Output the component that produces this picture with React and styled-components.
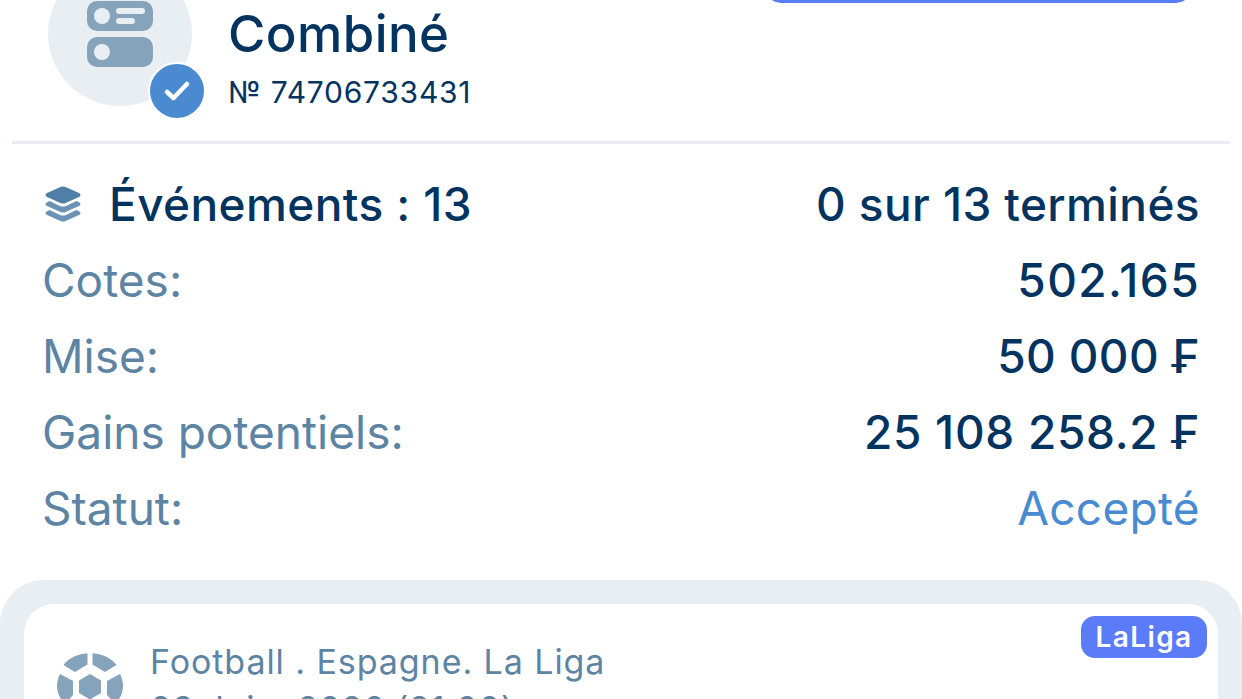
import React from "react";
import styled, { createGlobalStyle } from "styled-components";

const GlobalStyle = createGlobalStyle`
  html, body {
    margin: 0;
    padding: 0;
    background: #fff;
    overflow: hidden;
  }
  * {
    box-sizing: border-box;
  }
`;

const Page = styled.div`
  width: 1242px;
  height: 699px;
  overflow: hidden;
  font-family: Inter, "Liberation Sans", sans-serif;
  font-feature-settings: "calt" 0;
  color: #03345f;
`;

const Header = styled.div`
  display: flex;
  justify-content: space-between;
  align-items: flex-start;
  height: 182px;
  margin: -38px 12px 0;
  padding: 0 38px 0 36px;
  border-bottom: 3px solid #e9edf3;
`;

const HeaderLeft = styled.div`
  display: flex;
  gap: 37px;
`;

const Avatar = styled.div`
  position: relative;
  width: 144px;
  height: 144px;
  border-radius: 50%;
  background: #e9eef2;
  display: flex;
  align-items: center;
  justify-content: center;
`;

const CheckBadge = styled.div`
  position: absolute;
  right: -14px;
  bottom: -14px;
  width: 58px;
  height: 58px;
  border-radius: 50%;
  border: 2px solid #fff;
  background: #4a8ad0;
  display: flex;
  align-items: center;
  justify-content: center;
`;

const TitleBlock = styled.div`
  display: flex;
  flex-direction: column;
  padding-top: 43px;
`;

const Title = styled.div`
  font-size: 51px;
  line-height: 58px;
  font-weight: 500;
  letter-spacing: 0.4px;
  margin-left: -1px;
`;

const BetNumber = styled.div`
  margin-top: 11px;
  font-size: 30px;
  line-height: 36px;
  letter-spacing: 0.75px;
  margin-left: -1px;
`;

const TopButton = styled.div`
  width: 427px;
  height: 41px;
  border-radius: 0 0 16px 16px;
  background: #5b7cf9;
`;

const Summary = styled.div`
  display: flex;
  flex-direction: column;
  padding: 22px 42px 0 43px;
`;

const Row = styled.div`
  display: flex;
  justify-content: space-between;
  align-items: center;
  height: 76px;
  font-size: 46px;
`;

const EventsLabel = styled.div`
  display: flex;
  align-items: center;
  gap: 28px;
  font-weight: 500;
  letter-spacing: 0.4px;
`;

const IconSlot = styled.span`
  display: flex;
  margin-left: 2px;
`;

const Label = styled.span`
  color: #5d84a3;
  margin-left: -1px;
`;

const Value = styled.span`
  font-weight: ${(p) => (p.$regular ? 400 : 500)};
  color: ${(p) => p.$color || "#03345f"};
  letter-spacing: ${(p) => p.$spacing || 0}px;
`;

const Outer = styled.div`
  margin-top: 34px;
  padding: 24px 24px 0;
  height: 300px;
  border-radius: 44px 44px 0 0;
  background: #e9eef2;
`;

const Card = styled.div`
  position: relative;
  height: 100%;
  padding: 38px 28px 0 33px;
  display: flex;
  align-items: flex-start;
  gap: 27px;
  border-radius: 30px 30px 0 0;
  background: #fff;
`;

const LeagueBadge = styled.div`
  position: absolute;
  top: 12px;
  right: 11px;
  width: 126px;
  height: 42px;
  border-radius: 14px;
  background: #5b7cf9;
  color: #fff;
  font-size: 28px;
  font-weight: 600;
  letter-spacing: 1.4px;
  display: flex;
  align-items: center;
  justify-content: center;
`;

const BallSlot = styled.span`
  display: flex;
  flex-shrink: 0;
  margin-top: 11px;
`;

const MatchInfo = styled.div`
  display: flex;
  flex-direction: column;
  gap: 7px;
  font-size: 34px;
  line-height: 40px;
  letter-spacing: 0.93px;
  color: #5d84a3;
`;

const BetTypeIcon = () => (
  <svg width="66" height="66" viewBox="0 0 66 66" fill="#86a3bc">
    <rect x="0" y="0" width="66" height="30" rx="10" />
    <rect x="0" y="36" width="66" height="30" rx="10" />
    <circle cx="15" cy="15" r="8" fill="#e9eef2" />
    <circle cx="15" cy="51" r="8" fill="#e9eef2" />
    <rect x="29" y="7" width="29" height="6" rx="3" fill="#e9eef2" />
    <rect x="29" y="17" width="19" height="6" rx="3" fill="#e9eef2" />
  </svg>
);

const CheckIcon = () => (
  <svg width="28" height="24" viewBox="0 0 28 24" fill="none">
    <path d="M4 13l6.500 6L24 5" stroke="#fff" strokeWidth="4.500" strokeLinecap="round" strokeLinejoin="round" />
  </svg>
);

const LayersIcon = () => (
  <svg width="36" height="36" viewBox="0 0 36 36">
    <path d="M15.500 1c1.500-.7 3.500-.7 5 0l13.500 6c2 1 2 3 0 4l-13.500 6c-1.500.7-3.500.7-5 0L2 11C0 10 0 8 2 7z" fill="#4f7fa6" />
    <path d="M4.500 15l10.500 5c2 .8 4 .8 6 0l10.500-5 2.500 1.200c2 1 2 2.800 0 3.800l-13.500 6c-1.500.7-3.500.7-5 0L2 20c-2-1-2-2.800 0-3.800z" fill="#6a93b5" />
    <path d="M4.500 24l10.500 5c2 .8 4 .8 6 0l10.500-5 2.500 1.200c2 1 2 2.800 0 3.800l-13.500 6c-1.500.7-3.500.7-5 0L2 29c-2-1-2-2.800 0-3.800z" fill="#6a93b5" />
  </svg>
);

const BallIcon = () => (
  <svg width="66" height="66" viewBox="0 0 66 66" fill="#86a3bc">
    <path d="M33 21l11 6.500V40l-11 6.500L22 40V27.500z" />
    <path d="M30.500.2V11.500L18 19 6.500 12C12 5 20 1 30.500.2z" />
    <path d="M35.500.2C46 1 54 5 59.500 12L48 19 35.500 11.500z" />
    <path d="M3 21l13 7v14l-8 9C3 46 0 40 0 33c0-4 1-8 3-12z" />
    <path d="M63 21c2 4 3 8 3 12 0 7-3 13-8 18l-8-9V28z" />
  </svg>
);

const rows = [
  { label: "Cotes:", value: "502.165", spacing: 1.4 },
  { label: "Mise:", value: "50 000 ₣", spacing: 0.4 },
  { label: "Gains potentiels:", value: "25 108 258.2 ₣", spacing: 0.7 },
  { label: "Statut:", value: "Accepté", color: "#4a8ad0", regular: true, spacing: 0.3 },
];

const App = () => {
  return (
    <Page>
      <GlobalStyle />
      <Header>
        <HeaderLeft>
          <Avatar>
            <BetTypeIcon />
            <CheckBadge>
              <CheckIcon />
            </CheckBadge>
          </Avatar>
          <TitleBlock>
            <Title>Combiné</Title>
            <BetNumber>№ 74706733431</BetNumber>
          </TitleBlock>
        </HeaderLeft>
        <TopButton />
      </Header>
      <Summary>
        <Row>
          <EventsLabel>
            <IconSlot>
              <LayersIcon />
            </IconSlot>
            Événements : 13
          </EventsLabel>
          <Value $spacing={0.4}>0 sur 13 terminés</Value>
        </Row>
        {rows.map((row) => (
          <Row key={row.label}>
            <Label>{row.label}</Label>
            <Value $color={row.color} $regular={row.regular} $spacing={row.spacing}>
              {row.value}
            </Value>
          </Row>
        ))}
      </Summary>
      <Outer>
        <Card>
          <LeagueBadge>LaLiga</LeagueBadge>
          <BallSlot>
            <BallIcon />
          </BallSlot>
          <MatchInfo>
            <div>Football . Espagne. La Liga</div>
            <div>03 Juin. 2026 (21:00)</div>
          </MatchInfo>
        </Card>
      </Outer>
    </Page>
  );
};

export default App;
